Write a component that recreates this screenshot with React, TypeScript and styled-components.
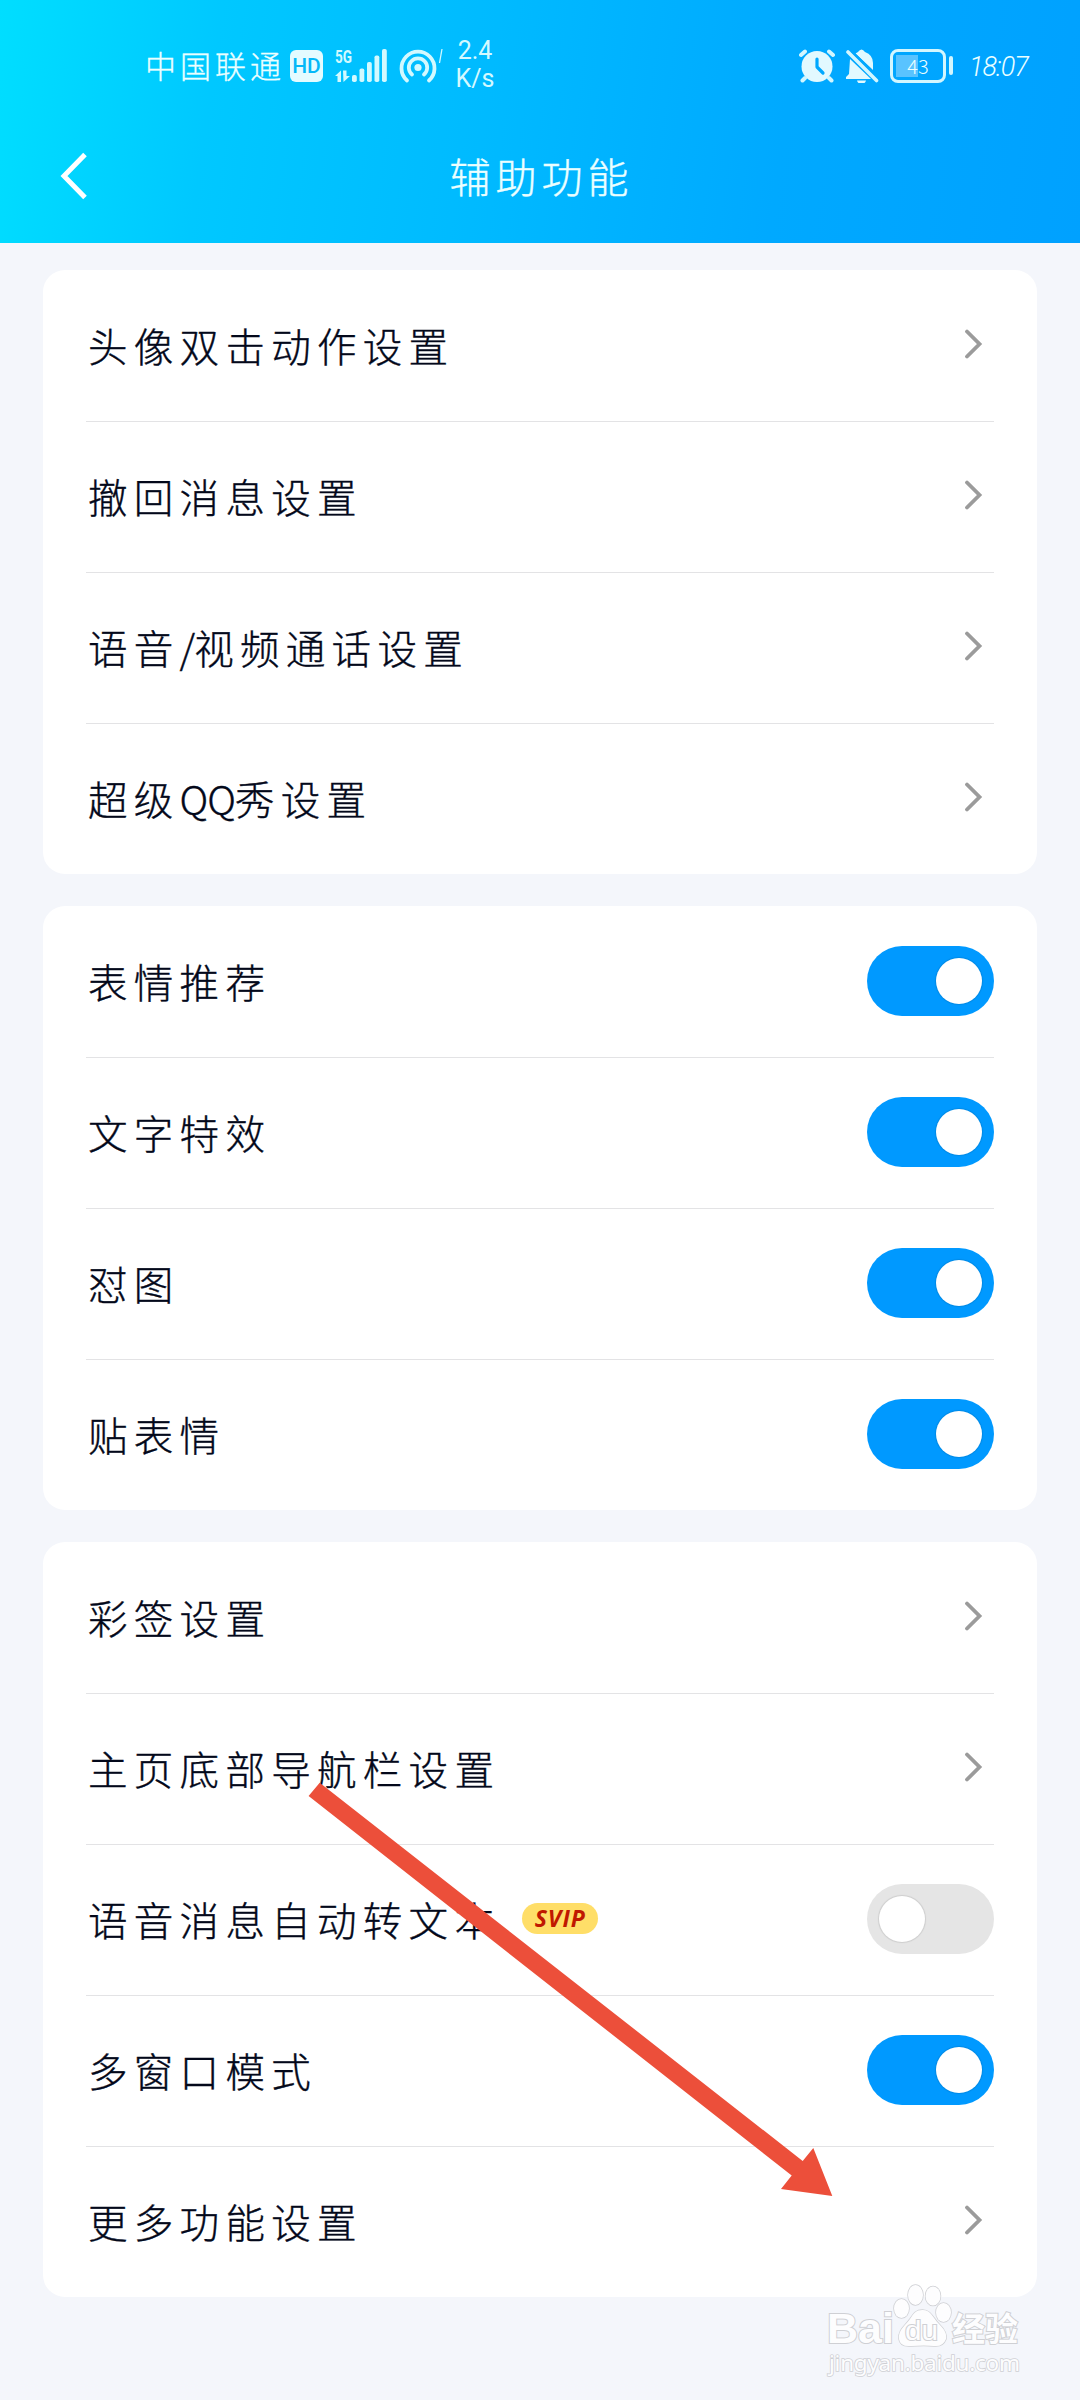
import React from "react";
import styled, { createGlobalStyle } from "styled-components";

const cjk = `"Noto Sans CJK SC", sans-serif`;

const GlobalStyle = createGlobalStyle`
  * { box-sizing: border-box; }
  body { margin: 0; background: #f4f6fb; }
`;

const Screen = styled.main`
  position: relative;
  width: 1080px;
  height: 2400px;
  overflow: hidden;
  background: #f4f6fb;
  font-family: ${cjk};
  font-weight: 300;
`;

const Header = styled.header`
  height: 243px;
  color: #ebffff;
  background: linear-gradient(98deg, #00deff 0%, #00dbff 3%, #00c8ff 20%, #00baff 45%, #00a9ff 72%, #00a1ff 100%);
`;

const StatusBar = styled.div`
  height: 131px;
  padding: 0 49px 0 145px;
  display: flex;
  align-items: center;
`;

const Carrier = styled.span`
  width: 145px;
  padding-bottom: 2px;
  font-size: 31px;
  letter-spacing: 4px;
  white-space: nowrap;
  -webkit-text-stroke: 0.3px currentColor;
`;

const HdBadge = styled.span`
  width: 33px;
  height: 32px;
  border-radius: 6px;
  display: flex;
  align-items: center;
  justify-content: center;
  background: #e4fbff;
  color: #04b8f8;
  font: 500 21px/32px Roboto, sans-serif;
`;

const SignalIcon = styled.svg`
  margin-left: 11px;
  flex: none;
  overflow: visible;
`;

const Speed = styled.span`
  width: 40px;
  margin-left: 12px;
  padding-bottom: 1px;
  color: #d4f9ff;
  font: 400 25px/28px Roboto, sans-serif;
  text-align: center;
`;

const StatusRight = styled.div`
  margin-left: auto;
  display: flex;
  align-items: center;
`;

const StatusIcon = styled.svg`
  display: block;
  margin-right: 11px;
`;

const Battery = styled.div`
  display: flex;
  align-items: center;
  margin-right: 16px;
`;

const BatteryBody = styled.div`
  width: 56px;
  height: 34px;
  padding: 3px;
  border: 3px solid #d2f6ff;
  border-radius: 8px;
  font: 300 20px/22px ${cjk};
  text-align: center;
  background: linear-gradient(#59c3ff, #59c3ff) 3px 3px / 22px 22px no-repeat;
`;

const BatteryTip = styled.div`
  width: 4px;
  height: 19px;
  margin-left: 3px;
  border-radius: 2px;
  background: #d2f6ff;
`;

const Clock = styled.span`
  width: 62px;
  white-space: nowrap;
  font: italic 300 27px/30px Roboto, sans-serif;
  letter-spacing: -1px;
  padding-top: 2px;
`;

const TitleBar = styled.div`
  height: 90px;
  padding: 0 60px;
  display: grid;
  grid-template-columns: 60px 1fr 60px;
  align-items: center;
`;

const Title = styled.h1`
  margin: 0;
  padding: 0 0 2px 3px;
  font-size: 41px;
  font-weight: 300;
  line-height: 60px;
  letter-spacing: 5px;
  text-align: center;
  -webkit-text-stroke: 0.4px currentColor;
`;

const Content = styled.div`
  padding: 27px 43px 0;
  display: flex;
  flex-direction: column;
  gap: 32px;
`;

const Card = styled.section`
  padding: 0 43px;
  border-radius: 22px;
  background: #fff;
`;

const Row = styled.div`
  height: 151px;
  display: flex;
  align-items: center;
  border-top: 1px solid transparent;
  & + & { border-top-color: #e3e3e5; }
`;

const Label = styled.span`
  padding: 0 0 3px 2px;
  color: #03081a;
  font-size: 39.5px;
  line-height: 60px;
  letter-spacing: 6.3px;
  white-space: nowrap;
  -webkit-text-stroke: 0.4px currentColor;
`;

const Latin = styled.span`
  letter-spacing: -1px;
`;

const Svip = styled.span`
  width: 76px;
  height: 31px;
  margin: 0 0 3px 22px;
  border-radius: 16px;
  background: #ffde68;
  color: #c01800;
  font: italic 700 23px/31px "Open Sans", sans-serif;
  letter-spacing: 1px;
  text-align: center;
`;

const Chevron = styled.svg`
  margin: 0 11px 4px auto;
`;

const Toggle = styled.span<{ $on: boolean }>`
  width: 127px;
  height: 70px;
  margin: 0 0 3px auto;
  padding: 0 12px;
  border-radius: 35px;
  display: flex;
  align-items: center;
  justify-content: ${(p) => (p.$on ? "flex-end" : "flex-start")};
  background: ${(p) => (p.$on ? "#0099ff" : "#e5e5e5")};
`;

const Thumb = styled.span`
  width: 46px;
  height: 46px;
  border-radius: 50%;
  background: #fff;
  box-shadow: 0 0 1px 1px rgba(0, 0, 0, 0.1);
`;

const ArrowOverlay = styled.svg`
  position: absolute;
  left: 308px;
  top: 1782px;
`;

const Watermark = styled.svg`
  position: absolute;
  left: 820px;
  top: 2276px;
`;

type Item = { label: string; on?: boolean; svip?: boolean };

const groups: Item[][] = [
  [{ label: "头像双击动作设置" }, { label: "撤回消息设置" }, { label: "语音/视频通话设置" }, { label: "超级QQ秀设置" }],
  [
    { label: "表情推荐", on: true },
    { label: "文字特效", on: true },
    { label: "怼图", on: true },
    { label: "贴表情", on: true },
  ],
  [
    { label: "彩签设置" },
    { label: "主页底部导航栏设置" },
    { label: "语音消息自动转文本", on: false, svip: true },
    { label: "多窗口模式", on: true },
    { label: "更多功能设置" },
  ],
];

function SettingRow({ label, on, svip }: Item) {
  return (
    <Row>
      <Label>
        {label.split(/([A-Za-z/]+)/).map((part, i) => (i % 2 ? <Latin key={i}>{part}</Latin> : part))}
      </Label>
      {svip && <Svip>SVIP</Svip>}
      {on === undefined ? (
        <Chevron width="19" height="30" viewBox="0 0 19 30" fill="none" stroke="#9b9b9b" strokeWidth="3.8">
          <path d="M3 2.500 15.500 15 3 27.500" strokeLinecap="round" />
        </Chevron>
      ) : (
        <Toggle $on={on}>
          <Thumb />
        </Toggle>
      )}
    </Row>
  );
}

function Signal() {
  return (
    <SignalIcon width="104" height="36" viewBox="334 47 104 36" fill="#d2f9ff">
      <text x="335" y="62" fontFamily="Roboto" fontWeight="700" fontSize="19" textLength="17" lengthAdjust="spacingAndGlyphs">
        5G
      </text>
      <path d="M335 75 341 69.5V81H337.5V75ZM343 69.5H346.500V75H350L343.500 81Z" />
      {[[352, 74], [359.500, 67.500], [367, 61], [374.500, 54.500], [382, 48]].map(([x, y]) => (
        <rect key={x} x={x} y={y} width="4.800" height={81 - y} rx="1.800" />
      ))}
      <g fill="none" stroke="#d2f9ff" strokeWidth="3.800" strokeLinecap="round">
        <path d="M407 79.500A16.500 16.500 0 1 1 429 79.500" />
        <path d="M412 73.500A9.200 9.200 0 1 1 424 73.500" />
      </g>
      <circle cx="418" cy="66.500" r="3.600" />
    </SignalIcon>
  );
}

export default function App() {
  return (
    <Screen>
      <GlobalStyle />
      <Header>
        <StatusBar>
          <Carrier>中国联通</Carrier>
          <HdBadge>HD</HdBadge>
          <Signal />
          <svg width="5" height="36" viewBox="0 0 5 36">
            <path d="M4 1 1.500 15" stroke="#d2f9ff" strokeWidth="1.300" />
          </svg>
          <Speed>
            2.4
            <br />
            K/s
          </Speed>
          <StatusRight>
            <StatusIcon width="36" height="34" viewBox="0 0 36 34">
              <circle cx="18" cy="17.500" r="15.500" fill="#e2f9ff" />
              <path d="M2 6 6 2.500M34 6 30 2.500M6 29 3.500 31.500M30 29 32.500 31.500" stroke="#d2f6ff" strokeWidth="4" strokeLinecap="round" />
              <path d="M18 10V18L24 24" fill="none" stroke="#00a8ff" strokeWidth="3.200" strokeLinecap="round" strokeLinejoin="round" />
            </StatusIcon>
            <StatusIcon width="33" height="34" viewBox="0 0 33 34" fill="#e2f9ff">
              <path d="M4 10 25 30H0V28L3 25Z" />
              <path d="M9.500 4.500 12 3Q15.500-2 19 3 27 6 27 14V21Z" />
              <path d="M11 31.500H20Q19 35 15.500 35T11 31.500Z" />
              <path d="M2 3 30.500 31.500" stroke="#d2f6ff" strokeWidth="3.600" strokeLinecap="round" />
              <path d="M5.500 2 30.500 26.500" stroke="#00a8ff" strokeWidth="2" />
            </StatusIcon>
            <Battery>
              <BatteryBody>43</BatteryBody>
              <BatteryTip />
            </Battery>
            <Clock>18:07</Clock>
          </StatusRight>
        </StatusBar>
        <TitleBar>
          <svg width="28" height="48" viewBox="0 0 28 48" fill="none">
            <path d="M25 2.500 4 24 25 45.500" stroke="#fff" strokeWidth="5" />
          </svg>
          <Title>辅助功能</Title>
        </TitleBar>
      </Header>
      <Content>
        {groups.map((items, i) => (
          <Card key={i}>
            {items.map((item) => (
              <SettingRow key={item.label} {...item} />
            ))}
          </Card>
        ))}
      </Content>
      <ArrowOverlay width="526" height="416" viewBox="308 1782 526 416">
        <path d="M319.700 1782.700 802.700 2161 813.300 2148 832.300 2196 781 2189 791.700 2175.500 308.600 1796Z" fill="#ec4f3a" />
      </ArrowOverlay>
      <Watermark width="210" height="110" viewBox="820 2276 210 110" fill="#fdfdfe" stroke="#cfd0d4" strokeWidth="2" paintOrder="stroke">
        <text x="827" y="2343" fontFamily="Liberation Sans" fontWeight="700" fontSize="43" textLength="67" lengthAdjust="spacingAndGlyphs">
          Bai
        </text>
        <g strokeWidth="1.500">
          <ellipse cx="901.500" cy="2308.500" rx="7.500" ry="9.500" />
          <ellipse cx="915.500" cy="2295" rx="7.500" ry="10" />
          <ellipse cx="933" cy="2296" rx="7.500" ry="9.500" />
          <ellipse cx="943.500" cy="2312.500" rx="7.500" ry="9.500" />
          <path d="M922.500 2310C931 2310 933 2318 939 2324S947 2334 946 2339Q943 2347 934 2346T911 2346Q900 2347 899 2339C898 2330 905 2326 910 2319 914 2313 916 2310 922.500 2310Z" />
        </g>
        <text x="905" y="2340" fontFamily="Liberation Sans" fontWeight="400" fontSize="27" textLength="33" lengthAdjust="spacingAndGlyphs">
          du
        </text>
        <text x="952" y="2341" fontFamily="Noto Sans CJK SC" fontWeight="700" fontSize="33">
          经验
        </text>
        <text x="829" y="2371" fontFamily="Noto Sans" fontWeight="400" fontSize="22.500" textLength="191" strokeWidth="1.600">
          jingyan.baidu.com
        </text>
      </Watermark>
    </Screen>
  );
}
